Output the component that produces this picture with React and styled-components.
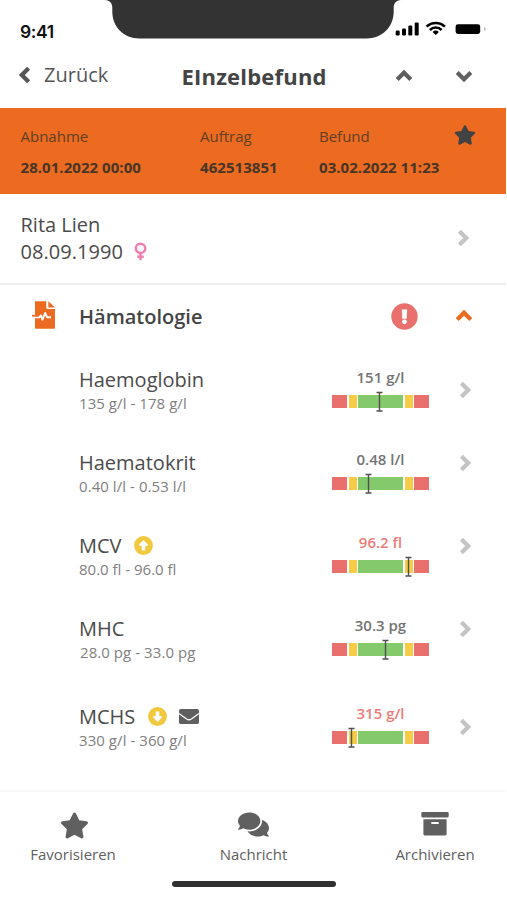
import styled, { createGlobalStyle } from 'styled-components';
import { FaComments, FaStar } from 'react-icons/fa';

const GlobalStyle = createGlobalStyle`
* {
box-sizing: border-box;
}
body {
margin: 0;
background: #fff;
font-family: "Open Sans", "Noto Sans", sans-serif;
color: #4b4b4b;
}
svg {
display: block;
flex-shrink: 0;
}
`

const Screen = styled.div`
display: flex;
flex-direction: column;
width: 506px;
height: 900px;
overflow: hidden;
background: #fff;
`

const StatusBar = styled.div`
position: relative;
display: flex;
justify-content: space-between;
align-items: flex-start;
height: 50px;
padding: 20px 20px 0 20px;
`

const Notch = styled.svg`
position: absolute;
top: 0;
left: 105px;
`

const Time = styled.div`
padding-top: 1px;
font-family: Inter, sans-serif;
font-size: 17.5px;
line-height: 22px;
font-weight: 600;
letter-spacing: -0.4px;
color: #111;
`

const NavBar = styled.div`
display: grid;
grid-template-columns: 161.5px 212.5px 60px 20px;
align-items: start;
height: 58px;
padding: 0 0 0 20px;
color: #5f5f5f;
`

const BackButton = styled.div`
display: flex;
align-items: center;
gap: 9px;
margin-left: -5px;
padding-top: 11px;
font-size: 20px;
line-height: 27px;
color: #555;
`

const Title = styled.div`
padding-top: 12px;
font-size: 22px;
line-height: 28px;
font-weight: 700;
letter-spacing: 0.2px;
color: #444;
`

const NavArrow = styled.div`
padding-top: 15.5px;
`

const OrderBanner = styled.div`
display: grid;
grid-template-columns: 179.5px 119px 134.5px 22px;
align-items: start;
height: 86px;
padding: 17px 0 0 20.5px;
background: #ec6b20;
`

const OrderLabel = styled.div`
padding-top: 1px;
font-size: 15px;
line-height: 20px;
color: #624026;
`

const OrderValue = styled.div`
margin-top: 11px;
font-size: 15px;
line-height: 20px;
font-weight: 700;
letter-spacing: 0.05px;
white-space: nowrap;
color: #473527;
`

const FavoriteMark = styled.div`
margin-top: -1px;
color: #424242;
`

const Patient = styled.div`
display: flex;
justify-content: space-between;
align-items: flex-start;
height: 91px;
padding: 17px 33px 0 20.5px;
border-bottom: 2px solid #ededed;
font-size: 20px;
line-height: 27px;
`

const BirthDate = styled.div`
display: flex;
align-items: center;
gap: 11px;
letter-spacing: 0.05px;
`

const PatientArrow = styled.div`
padding-top: 17px;
color: #c4c4c4;
`

const GroupHeader = styled.div`
display: grid;
grid-template-columns: 48px 312px 63px 20px;
align-items: center;
height: 62px;
padding: 0 0 0 31px;
color: #ec6b20;
`

const GroupIcon = styled.div`
margin-bottom: 3px;
`

const GroupName = styled.div`
font-size: 20px;
line-height: 27px;
font-weight: 600;
color: #444;
`

const ResultList = styled.div`
height: 443px;
padding-top: 3px;
`

const ResultRow = styled.div`
display: grid;
grid-template-columns: 253px 97px 46px;
align-items: start;
height: 83px;
margin-top: ${props => props.$gap || 0}px;
padding: 16px 0 0 79px;
`

const ResultName = styled.div`
display: flex;
align-items: center;
height: 27px;
font-size: 20px;
line-height: 27px;
`

const Marker = styled.div`
margin-left: 12.5px;
`

const Range = styled.div`
margin-top: -1px;
margin-left: ${props => props.$indent || 0}px;
font-size: 15px;
line-height: 22px;
letter-spacing: ${props => props.$spaced ? '0.06px' : 'normal'};
color: #808080;
`

const ValueColumn = styled.div`
margin-top: ${props => props.$lift ? -1 : 0}px;
`

const Value = styled.div`
padding-top: 1px;
font-size: 15px;
line-height: 20px;
font-weight: 600;
text-align: center;
color: ${props => props.$alert ? '#ec7c79' : '#747474'};
`

const Scale = styled.div`
position: relative;
display: grid;
grid-template-columns: 15px 8px 45px 8px 15px;
column-gap: 1.5px;
height: 13px;
margin-top: 8px;
`

const Segment = styled.div`
background: ${props => props.$color};
`

const Pointer = styled.svg`
position: absolute;
top: -4px;
margin-left: -3.5px;
`

const RowArrow = styled.div`
margin-left: 26px;
padding-top: ${props => props.$top}px;
color: #c4c4c4;
`

const TabBar = styled.div`
display: grid;
grid-template-columns: 146px 215px 148px;
height: 90px;
border-top: 2px solid #f7f7f7;
color: #606060;
`

const Tab = styled.div`
display: flex;
flex-direction: column;
align-items: center;
padding-top: 17px;
font-size: 15px;
line-height: 20px;
`

const TabIcon = styled.div`
display: flex;
align-items: center;
height: 32px;
margin-top: ${props => props.$lift ? -1 : 0}px;
margin-bottom: ${props => props.$lift ? 4 : 3}px;
margin-left: ${props => props.$shift || 0}px;
`

const HomeIndicator = styled.div`
width: 164px;
height: 6px;
margin: 1px 0 0 172px;
border-radius: 3px;
background: #303030;
`

const segments = ['#e9706d', '#f6cb45', '#84c96b', '#f6cb45', '#e9706d'];

const results = [
    { name: 'Haemoglobin', range: '135 g/l - 178 g/l', value: '151 g/l', pos: 47.2, arrowTop: 13.5 },
    { name: 'Haematokrit', range: '0.40 l/l - 0.53 l/l', value: '0.48 l/l', pos: 36.3, arrowTop: 3.5, lift: true },
    { name: 'MCV', range: '80.0 fl - 96.0 fl', value: '96.2 fl', pos: 76.7, arrowTop: 3.5, trend: 'up', alert: true, lift: true },
    { name: 'MHC', range: '28.0 pg - 33.0 pg', value: '30.3 pg', pos: 53.4, arrowTop: 4, indent: 1, lift: true },
    { name: 'MCHS', range: '330 g/l - 360 g/l', value: '315 g/l', pos: 19.3, arrowTop: 13.5, trend: 'down', mail: true, alert: true, gap: 5, lift: true },
];

const rotation = { up: 0, right: 90, down: 180, left: 270 };

const Chevron = ({ direction }) => (
    <svg width="20" height="20" viewBox="0 0 20 20">
        <path
            d="M3.2 13.6L10 6.8l6.8 6.8"
            transform={`rotate(${rotation[direction]} 10 10)`}
            fill="none"
            stroke="currentColor"
            strokeWidth="4.2"
        />
    </svg>
)

const StatusIcons = () => (
    <svg width="92" height="16" viewBox="0 0 92 16">
        <g fill="#000">
            <rect x="1.7" y="10.6" width="4" height="4.8" rx="1.2" />
            <rect x="8" y="8.6" width="4" height="6.8" rx="1.2" />
            <rect x="14.3" y="5.6" width="4" height="9.8" rx="1.2" />
            <rect x="20.7" y="2.4" width="4" height="13" rx="1.2" />
            <path d="M38.6 12a4.6 4.6 0 0 1 6.3 0l-3.150 3.1z" />
            <rect x="61.6" y="4.3" width="24.6" height="9.6" rx="2.4" />
        </g>
        <g fill="none" stroke="#000" strokeWidth="2.5">
            <path d="M32.6 6.7a13 13 0 0 1 18.3 0" />
            <path d="M35.9 10a8.3 8.3 0 0 1 11.7 0" />
        </g>
        <path d="M90.4 7.1v4c1.5-.8 1.5-3.2 0-4z" fill="#999" />
    </svg>
)

const VenusIcon = () => (
    <svg width="13" height="19" viewBox="0 0 13 19" fill="none" stroke="#ef7fb0">
        <circle cx="6.5" cy="6.4" r="4.7" strokeWidth="2.5" />
        <path d="M6.5 11v7.2M3.3 14.8h6.4" strokeWidth="2.4" />
    </svg>
)

const FindingIcon = () => (
    <svg width="25" height="29" viewBox="0 0 25 29">
        <path d="M4 1.3h11.3v6.6a1 1 0 0 0 1 1H24v18.8a1 1 0 0 1-1 1H5a1 1 0 0 1-1-1z" fill="#ec6b20" />
        <path d="M17.3 1.3L24 7.4h-6.2a.5.5 0 0 1-.5-.5z" fill="#ec6b20" />
        <path d="M4 17.4h4.3l1.6-2 1.6 4.2 2.6-6.6 1.9 4.2h4" fill="none" stroke="#fff" strokeWidth="1.9" strokeLinejoin="round" />
        <path d="M1 15.7h6.5" fill="none" stroke="#ec6b20" strokeWidth="1.7" />
    </svg>
)

const AlertIcon = () => (
    <svg width="27" height="27" viewBox="0 0 27 27">
        <circle cx="13.5" cy="13.5" r="13.2" fill="#e9706d" />
        <path d="M10.8 6.5h5.4l-.5 9.3h-4.4z" fill="#fff" />
        <circle cx="13.5" cy="18.8" r="2.4" fill="#fff" />
    </svg>
)

const TrendIcon = ({ trend }) => (
    <svg width="19" height="19" viewBox="0 0 19 19">
        <circle cx="9.5" cy="9.5" r="9.4" fill="#f2c83f" />
        <path
            d="M9.5 3.9l4.7 4.9-1.2 1.2H11.3v4.6H7.7V10H6L4.8 8.8z"
            transform={trend === 'down' ? 'rotate(180 9.5 9.5)' : undefined}
            fill="#fff"
        />
    </svg>
)

const MailIcon = () => (
    <svg width="20" height="15" viewBox="0 0 20 15">
        <rect width="20" height="15" rx="1.8" fill="#5f5f5f" />
        <path d="M0 4.5l7.6 5.5q2.4 1.5 4.8 0L20 4.5" fill="none" stroke="#fff" strokeWidth="1.3" />
    </svg>
)

const ArchiveIcon = () => (
    <svg width="28" height="24" viewBox="0 0 28 24" fill="#606060">
        <rect x=".3" y="0" width="27.4" height="5.4" rx="1.4" />
        <path d="M2.4 7.2h23.2v14.9a1.4 1.4 0 0 1-1.4 1.4H3.8a1.4 1.4 0 0 1-1.4-1.4z" />
        <rect x="10.2" y="9.9" width="7.6" height="2" rx=".6" fill="#fff" />
    </svg>
)

const ReferenceScale = ({ pos }) => (
    <Scale>
        {segments.map((color, i) => <Segment key={i} $color={color} />)}
        <Pointer width="7" height="21" viewBox="0 0 7 21" style={{ left: pos }}>
            <path d="M.5 1.5h6M3.5 1.5v18.5M.5 20h6" fill="none" stroke="#505050" strokeWidth="1.4" />
        </Pointer>
    </Scale>
)

const ResultItem = ({ result }) => {
    return (
        <ResultRow $gap={result.gap}>
            <div>
                <ResultName>
                    {result.name}
                    {result.trend ? <Marker><TrendIcon trend={result.trend} /></Marker> : <></>}
                    {result.mail ? <Marker><MailIcon /></Marker> : <></>}
                </ResultName>
                <Range $indent={result.indent} $spaced={!result.range.includes('fl')}>{result.range}</Range>
            </div>
            <ValueColumn $lift={result.lift}>
                <Value $alert={result.alert}>{result.value}</Value>
                <ReferenceScale pos={result.pos} />
            </ValueColumn>
            <RowArrow $top={result.arrowTop}><Chevron direction="right" /></RowArrow>
        </ResultRow>
    )
}

const App = () => {
    return (
        <>
            <GlobalStyle />
            <Screen>
                <StatusBar>
                    <Notch width="296" height="39" viewBox="0 0 296 39">
                        <path d="M0 0c5 .6 7.3 3 7.3 8v3.5c0 15.5 11.5 27 27 27h227.4c15.5 0 27-11.5 27-27V8c0-5 2.3-7.4 7.3-8z" fill="#333" />
                    </Notch>
                    <Time>9:41</Time>
                    <StatusIcons />
                </StatusBar>

                <NavBar>
                    <BackButton><Chevron direction="left" />Zurück</BackButton>
                    <Title>EInzelbefund</Title>
                    <NavArrow><Chevron direction="up" /></NavArrow>
                    <NavArrow><Chevron direction="down" /></NavArrow>
                </NavBar>

                <OrderBanner>
                    <div>
                        <OrderLabel>Abnahme</OrderLabel>
                        <OrderValue>28.01.2022 00:00</OrderValue>
                    </div>
                    <div>
                        <OrderLabel>Auftrag</OrderLabel>
                        <OrderValue>462513851</OrderValue>
                    </div>
                    <div>
                        <OrderLabel>Befund</OrderLabel>
                        <OrderValue>03.02.2022 11:23</OrderValue>
                    </div>
                    <FavoriteMark><FaStar size={22} /></FavoriteMark>
                </OrderBanner>

                <Patient>
                    <div>
                        <div>Rita Lien</div>
                        <BirthDate>08.09.1990 <VenusIcon /></BirthDate>
                    </div>
                    <PatientArrow><Chevron direction="right" /></PatientArrow>
                </Patient>

                <GroupHeader>
                    <GroupIcon><FindingIcon /></GroupIcon>
                    <GroupName>Hämatologie</GroupName>
                    <AlertIcon />
                    <Chevron direction="up" />
                </GroupHeader>

                <ResultList>
                    {results.map(result => <ResultItem key={result.name} result={result} />)}
                </ResultList>

                <TabBar>
                    <Tab>
                        <TabIcon $shift={2}><FaStar size={29} /></TabIcon>
                        Favorisieren
                    </Tab>
                    <Tab>
                        <TabIcon $lift><FaComments size={31} /></TabIcon>
                        Nachricht
                    </Tab>
                    <Tab>
                        <TabIcon $lift><ArchiveIcon /></TabIcon>
                        Archivieren
                    </Tab>
                </TabBar>
                <HomeIndicator />
            </Screen>
        </>
    )
}
export default App;
